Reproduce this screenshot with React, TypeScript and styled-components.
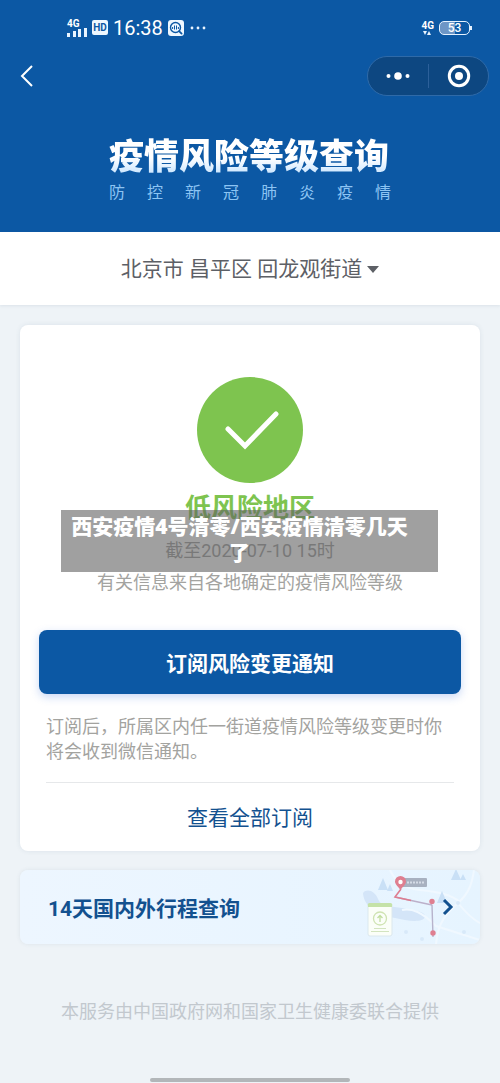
import React from "react";
import styled, { createGlobalStyle } from "styled-components";

const color = {
  blue: "#0c58a4",
  capsule: "#0d4781",
  page: "#eef3f7",
  green: "#7ec44f",
  link: "#13518f",
};

const GlobalStyle = createGlobalStyle`
  *, *::before, *::after { box-sizing: border-box; }
  body {
    margin: 0;
    background: ${color.page};
    font-family: Roboto, "Noto Sans CJK SC", sans-serif;
  }
  h1, h2, p { margin: 0; }
  button, select { font-family: inherit; border: 0; padding: 0; cursor: pointer; }
  a { text-decoration: none; }
  svg { display: block; }
`;

const Page = styled.div`
  position: relative;
  display: flex;
  flex-direction: column;
  min-height: 100vh;
`;

const Header = styled.header`
  background: ${color.blue};
  color: #fff;
  padding-bottom: 27px;
`;

const StatusBar = styled.div`
  display: flex;
  justify-content: space-between;
  align-items: center;
  height: 55px;
  padding: 0 30px 0 67px;
  font-family: Roboto, "Liberation Sans", sans-serif;
`;

const StatusGroup = styled.div`
  display: flex;
  align-items: center;
  gap: 5px;
`;

const Network = styled.div`
  display: flex;
  flex-direction: column;
  font-size: 10px;
  line-height: 9px;
  font-weight: 700;
`;

const HdBadge = styled.span`
  width: 16px;
  height: 15px;
  border-radius: 2px;
  background: #eef7ff;
  color: ${color.blue};
  font-size: 10px;
  line-height: 15px;
  font-weight: 700;
  text-align: center;
`;

const Clock = styled.time`
  font-size: 20px;
  line-height: 24px;
`;

const Battery = styled.div`
  position: relative;
  width: 31px;
  height: 14px;
  border: 1px solid #e6f2ff;
  border-radius: 5px;
  background: linear-gradient(90deg, #6d96c6 53%, transparent 53%);
  font-size: 12px;
  line-height: 13px;
  font-weight: 500;
  text-align: center;

  &::after {
    content: "";
    position: absolute;
    right: -3px;
    top: 4px;
    width: 2px;
    height: 4px;
    background: #e6f2ff;
  }
`;

const NavBar = styled.nav`
  display: flex;
  justify-content: space-between;
  align-items: center;
  padding: 0 11px 0 18px;
`;

const IconButton = styled.button`
  display: flex;
  align-items: center;
  justify-content: center;
  height: 41px;
  background: none;
  color: inherit;
`;

const Capsule = styled.div`
  display: flex;
  align-items: center;
  height: 40px;
  border: 1px solid #2f6aa8;
  border-radius: 20px;
  background: ${color.capsule};

  ${IconButton} { width: 60px; height: 24px; }
  ${IconButton} + ${IconButton} { border-left: 1px solid #2c609a; }
`;

const Titles = styled.div`
  width: 282px;
  margin: 42px auto 0;
`;

const Title = styled.h1`
  font-size: 35px;
  line-height: 40px;
  font-weight: 900;
  white-space: nowrap;
  color: transparent;
  background: linear-gradient(#ffffff 50%, #c9e5ff 90%);
  background-clip: text;
  -webkit-background-clip: text;
`;

const Subtitle = styled.p`
  margin-top: 3px;
  font-size: 16px;
  line-height: 24px;
  color: #8cc4f3;
  text-align: justify;
  text-align-last: justify;
`;

const LocationBar = styled.div`
  display: flex;
  justify-content: center;
  align-items: center;
  gap: 5px;
  height: 73px;
  background: #fff;
  color: #5d6066;
  box-shadow: 0 1px 3px rgba(60, 90, 120, 0.1);
`;

const LocationSelect = styled.select`
  appearance: none;
  field-sizing: content;
  background: none;
  color: inherit;
  font-size: 21px;
  line-height: 32px;
`;

const Main = styled.main`
  display: flex;
  flex-direction: column;
  gap: 19px;
  padding: 20px 20px 0;
`;

const Card = styled.section`
  padding: 52px 19px 0;
  border-radius: 8px;
  background: #fff;
  box-shadow: 0 0 5px rgba(60, 90, 120, 0.1);
`;

const Result = styled.div`
  position: relative;
  display: flex;
  flex-direction: column;
  align-items: center;
  text-align: center;
`;

const Level = styled.h2`
  margin-top: 10px;
  font-size: 26px;
  line-height: 30px;
  font-weight: 700;
  color: ${color.green};
`;

const UpdatedAt = styled.p`
  margin-top: 16px;
  font-size: 18px;
  line-height: 24px;
  color: #9c9c9c;
`;

const Source = styled.p`
  margin-top: 8px;
  font-size: 18px;
  line-height: 24px;
  color: #a3a3a0;
`;

const Caption = styled.div`
  position: absolute;
  left: 22px;
  right: 23px;
  bottom: 23px;
  padding: 3px 26px 7px 6px;
  background: rgba(96, 96, 96, 0.6);
  color: #fff;
  font-family: "Noto Sans", "Noto Sans CJK SC", sans-serif;
  font-size: 21px;
  line-height: 26px;
  font-weight: 900;
`;

const SubscribeButton = styled.button`
  display: block;
  width: 100%;
  height: 64px;
  margin-top: 35px;
  border-radius: 8px;
  background: ${color.blue};
  color: #fff;
  font-size: 21px;
  font-weight: 700;
  box-shadow: 0 3px 8px rgba(40, 100, 220, 0.25);
`;

const Hint = styled.p`
  margin: 20px 7px 0;
  padding-bottom: 18px;
  border-bottom: 1px solid #e6e8ea;
  font-size: 18px;
  line-height: 25px;
  color: #a3a39f;
`;

const AllLink = styled.a`
  display: block;
  padding-top: 2px;
  font-size: 21px;
  line-height: 66px;
  text-align: center;
  color: ${color.link};
`;

const TripLink = styled.a`
  position: relative;
  display: flex;
  justify-content: space-between;
  align-items: center;
  height: 74px;
  padding: 0 26px 0 28px;
  overflow: hidden;
  border-radius: 8px;
  background: linear-gradient(90deg, #edf6ff, #e6f4ff);
  box-shadow: 0 0 4px rgba(60, 90, 120, 0.1);
  color: ${color.link};
  font-size: 21px;
  font-weight: 700;
`;

const TripMap = styled.svg`
  position: absolute;
  right: 0;
  top: 0;
`;

const Chevron = styled.svg`
  position: relative;
`;

const Footer = styled.footer`
  display: flex;
  flex: 1;
  flex-direction: column;
  justify-content: space-between;
  align-items: center;
  padding: 55px 20px 1px;
  font-size: 18px;
  line-height: 26px;
  color: #c2c8ce;
`;

const HomeIndicator = styled.div`
  width: 200px;
  height: 4px;
  border-radius: 2px;
  background: #b2b6b9;
`;

function SignalBars() {
  return (
    <svg width="20" height="9" viewBox="0 0 20 9" fill="#e9f4ff" aria-hidden="true">
      <rect x="0" y="5" width="3" height="4" />
      <rect x="6" y="3" width="3" height="6" />
      <rect x="11" y="1" width="3" height="8" />
      <rect x="17" y="0" width="3" height="9" />
    </svg>
  );
}

function ScanIcon() {
  return (
    <svg width="16" height="16" viewBox="0 0 16 16" fill="none" aria-hidden="true">
      <rect width="16" height="16" rx="3" fill="#eef7ff" />
      <circle cx="7.5" cy="7.5" r="5" stroke={color.blue} strokeWidth="1.4" />
      <path d="M11.3 11.3 13.6 13.6" stroke={color.blue} strokeWidth="1.8" strokeLinecap="round" />
      <path d="M4.6 9V7M6.5 9.5V5.5M8.5 9.5V5.5M10.4 9V7" stroke={color.blue} strokeWidth="1" />
    </svg>
  );
}

function TripMapArt() {
  return (
    <TripMap width="140" height="74" viewBox="0 0 140 74" fill="none" aria-hidden="true">
      <path d="M23 23c4-5 12-2 15 6 4 9 14 7 24 9 12 3 24 3 23 9-2 6-18 4-30 1-14-3-31-9-32-25Z" fill="#d4e5f8" />
      <g stroke="#f0f8ff" strokeWidth="2">
        <path d="M96 74c2-22 10-30 22-41s14-20 16-33" />
        <path d="M118 33c8 10 14 16 22 20" />
        <path d="M62 40c10-2 20 2 34 16l44 14" />
        <path d="M50 0c6 12 12 18 30 20s30 4 40 12" />
      </g>
      <g fill="#c9e0f6">
        <path d="m43 8 5 12H38Z" />
        <path d="m50 14 3 7h-6Z" />
        <path d="m116-1 5 11h-10Z" />
        <path d="m123 4 3 6h-6Z" />
        <path d="m102 21 5 12H97Z" />
      </g>
      <g fill="#d8e9f9">
        <circle cx="66" cy="62" r="2" />
        <circle cx="82" cy="69" r="2" />
        <circle cx="118" cy="33" r="2" />
        <circle cx="124" cy="62" r="2" />
      </g>
      <rect x="62" y="8" width="25" height="9" rx="1" fill="#a8b1c0" />
      <path d="M67 12.5h17" stroke="#d5dce6" strokeWidth="2" strokeDasharray="2 1" />
      <path d="m92 35 1 32" stroke="#b7b3cc" strokeWidth="1.4" />
      <path d="M55 27 92 35" stroke="#bcb0ca" strokeWidth="1.4" />
      <path d="m61 19-6 8 16 3.500" stroke="#de7d90" strokeWidth="1.6" />
      <path d="M60.500 20c-3-4-5.500-6-5.500-8.500a5.500 5.500 0 0 1 11 0c0 2.500-2.500 4.500-5.500 8.500Z" fill="#df7f90" />
      <circle cx="60.500" cy="12" r="2.200" fill="#fff" />
      <circle cx="92" cy="31.500" r="2.700" fill="#df7f90" />
      <circle cx="93" cy="63" r="2.700" fill="#df7f90" />
      <rect x="28" y="34" width="24" height="32" rx="2" fill="#fbfef8" stroke="#dbe8ee" />
      <path d="M28 36a2 2 0 0 1 2-3h20a2 2 0 0 1 2 3v1H28Z" fill="#c5e2a8" />
      <circle cx="40" cy="48.500" r="6.500" stroke="#cfe3b2" strokeWidth="1.300" />
      <path d="M40 52v-6.500M37.500 48l2.500-2.500 2.500 2.500" stroke="#c2dea0" strokeWidth="1.300" />
      <path d="M34 58.500h12M31 61.500h18" stroke="#d3e4bf" strokeWidth="1.200" />
    </TripMap>
  );
}

export default function App() {
  return (
    <Page>
      <GlobalStyle />
      <Header>
        <StatusBar>
          <StatusGroup>
            <Network>
              4G
              <SignalBars />
            </Network>
            <HdBadge>HD</HdBadge>
            <Clock>16:38</Clock>
            <ScanIcon />
            <svg width="18" height="4" viewBox="0 0 18 4" fill="#e9f4ff" aria-hidden="true">
              <circle cx="3" cy="2" r="1.400" />
              <circle cx="9" cy="2" r="1.400" />
              <circle cx="15" cy="2" r="1.400" />
            </svg>
          </StatusGroup>
          <StatusGroup>
            <Network>
              4G
              <svg width="12" height="5" viewBox="0 0 12 5" fill="#e9f4ff" aria-hidden="true">
                <path d="M2 1h4L4 5ZM6 5h4L8 1Z" />
              </svg>
            </Network>
            <Battery>53</Battery>
          </StatusGroup>
        </StatusBar>
        <NavBar>
          <IconButton type="button" aria-label="返回">
            <svg width="16" height="22" viewBox="0 0 16 22" fill="none" stroke="#fff" strokeWidth="2" aria-hidden="true">
              <path d="M14 1 4 11l10 10" />
            </svg>
          </IconButton>
          <Capsule>
            <IconButton type="button" aria-label="更多">
              <svg width="24" height="8" viewBox="0 0 24 8" fill="#fff" aria-hidden="true">
                <circle cx="2.500" cy="4" r="2" />
                <circle cx="12" cy="4" r="3.800" />
                <circle cx="21.500" cy="4" r="2" />
              </svg>
            </IconButton>
            <IconButton type="button" aria-label="关闭">
              <svg width="24" height="24" viewBox="0 0 24 24" aria-hidden="true">
                <circle cx="12" cy="12" r="9.700" fill="none" stroke="#fff" strokeWidth="3" />
                <circle cx="12" cy="12" r="4" fill="#fff" />
              </svg>
            </IconButton>
          </Capsule>
        </NavBar>
        <Titles>
          <Title>疫情风险等级查询</Title>
          <Subtitle>防控新冠肺炎疫情</Subtitle>
        </Titles>
      </Header>

      <LocationBar>
        <LocationSelect aria-label="所在地区">
          <option>北京市 昌平区 回龙观街道</option>
        </LocationSelect>
        <svg width="12" height="8" viewBox="0 0 12 8" fill="#5d6066" aria-hidden="true">
          <path d="M0 1h12L6 8Z" />
        </svg>
      </LocationBar>

      <Main>
        <Card>
          <Result>
            <svg width="106" height="106" viewBox="0 0 106 106" fill="none" aria-hidden="true">
              <circle cx="53" cy="53" r="53" fill={color.green} />
              <path d="M31 52 48 69 79 37" stroke="#fff" strokeWidth="5" strokeLinecap="round" />
            </svg>
            <Level>低风险地区</Level>
            <UpdatedAt>截至2020-07-10 15时</UpdatedAt>
            <Source>有关信息来自各地确定的疫情风险等级</Source>
            <Caption>西安疫情4号清零/西安疫情清零几天了</Caption>
          </Result>
          <SubscribeButton type="button">订阅风险变更通知</SubscribeButton>
          <Hint>订阅后，所属区内任一街道疫情风险等级变更时你将会收到微信通知。</Hint>
          <AllLink href="#subscriptions">查看全部订阅</AllLink>
        </Card>

        <TripLink href="#trips">
          <TripMapArt />
          <span>14天国内外行程查询</span>
          <Chevron width="12" height="18" viewBox="0 0 12 18" fill="none" stroke={color.link} strokeWidth="3" aria-hidden="true">
            <path d="M2 2 9 9 2 16" />
          </Chevron>
        </TripLink>
      </Main>

      <Footer>
        <p>本服务由中国政府网和国家卫生健康委联合提供</p>
        <HomeIndicator />
      </Footer>
    </Page>
  );
}
